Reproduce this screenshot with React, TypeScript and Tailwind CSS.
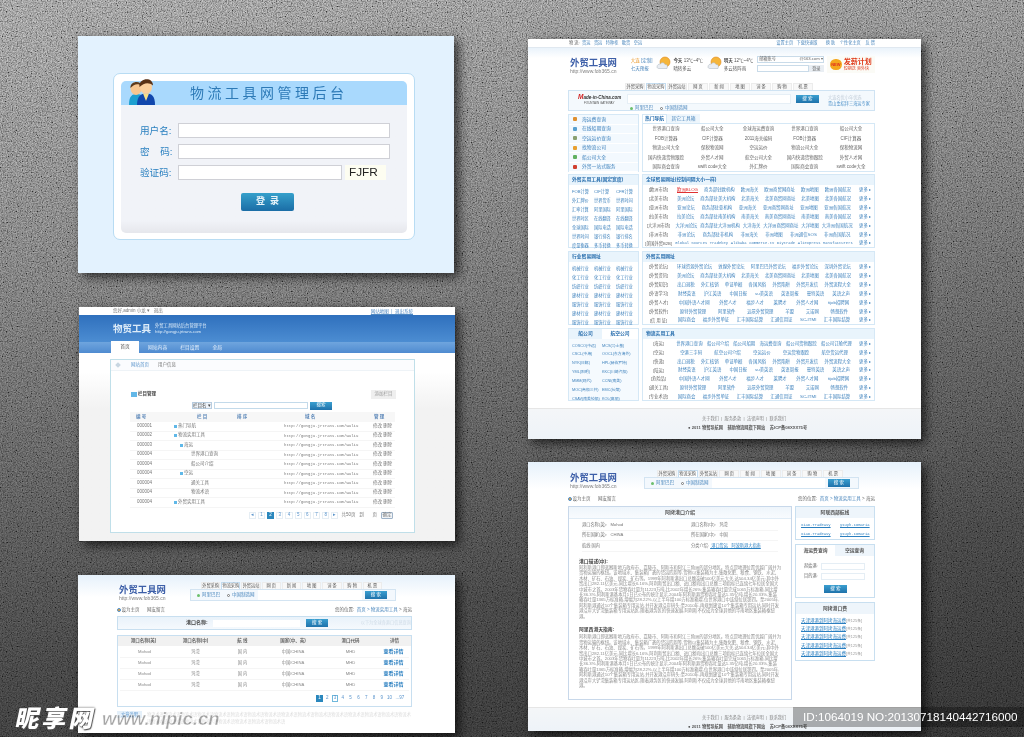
const fontStack = "font-['Liberation_Sans','Noto_Sans_CJK_SC',sans-serif]";

const tabs = ["外贸采购", "物流采购", "外贸运站", "网 页", "新 闻", "地 图", "词 条", "购 物", "机 票"];

function Logo() {
  return (
    <div>
      <div className="text-[9.4px] leading-[11px] font-bold text-[#3d5fa8] whitespace-nowrap">外贸工具网</div>
      <div className="text-[5px] leading-[7px] text-[#808080] whitespace-nowrap">http://www.fob365.cn</div>
    </div>
  );
}

function TabRow({ w }: { w: number }) {
  return (
    <div className="flex items-end gap-[1px]" style={{ width: w }}>
      {tabs.map((t, i) => (
        <div
          key={t}
          className={`flex-1 h-[7px] flex items-center justify-center text-[4.2px] text-[#555] whitespace-nowrap border-t border-x ${i === 1 ? "bg-white border-[#c4dcef]" : "bg-[#f8f8f8] border-[#ececec]"}`}
        >
          {t}
        </div>
      ))}
    </div>
  );
}

function Radios() {
  return (
    <div className="flex items-center gap-[7px] text-[4.5px] text-[#4a86bc] whitespace-nowrap">
      <span className="flex items-center gap-[2px]">
        <span className="w-[3px] h-[3px] rounded-full bg-[#6cbf6c]" />
        阿里巴巴
      </span>
      <span className="flex items-center gap-[2px]">
        <span className="w-[3px] h-[3px] rounded-full border-[0.5px] border-[#777] bg-white" />
        中国制造网
      </span>
    </div>
  );
}

function BlueBtn({ label, className }: { label: string; className: string }) {
  return (
    <div className={`flex items-center justify-center bg-gradient-to-b from-[#3a9fd0] to-[#1f72ab] text-white text-[4.5px] whitespace-nowrap ${className}`}>
      {label}
    </div>
  );
}

function Users() {
  return (
    <svg width="27" height="27" viewBox="0 0 27 27" className="shrink-0">
      <path d="M0 27 C0 18 3 16 8 16 C13 16 15 19 15 27Z" fill="#1d9fd0" />
      <ellipse cx="7" cy="10.5" rx="5.5" ry="6.5" fill="#f7c690" />
      <path d="M1.5 10 C1 3 12 2 13 8 C9 5 5 6 1.5 10Z" fill="#5b3a1e" />
      <path d="M8 27 C8 18 12 15.5 17 15.5 C23 15.5 26 18 26 27Z" fill="#1147ad" />
      <path d="M14 15.5 L17 23 L20 15.5Z" fill="#f6e08a" />
      <ellipse cx="17" cy="9" rx="6" ry="7" fill="#fbcf9c" />
      <path d="M10.500 9 C9 0 24 -2 24 7.500 C20 4 15 4.500 10.500 9Z" fill="#5a3216" />
    </svg>
  );
}

function LoginCard() {
  const label = "w-[33px] text-[9.6px] leading-[15px] text-[#2b80c0] whitespace-nowrap";
  const input = "h-[15px] bg-white border border-[#cfd0d6]";
  return (
    <div className="absolute left-[78px] top-[36px] w-[376px] h-[237px] bg-[#e3f2fe] shadow-[5px_4px_10px_rgba(0,0,0,0.65)] pt-[37px] pl-[35px] blur-[0.3px]">
      <div className="w-[302px] h-[167px] bg-white border border-[#b8dcf3] rounded-[7px] p-[7px]">
        <div className="h-[24px] bg-[#a9d9fd] rounded-t-[5px] flex items-end pl-[8px] relative">
          <Users />
          <div className="flex-1 h-[24px] flex items-center pl-[34px] text-[14px] tracking-[3.5px] text-[#2d7ab7] whitespace-nowrap">物流工具网管理后台</div>
        </div>
        <div className="h-[128px] bg-gradient-to-b from-[#f1f3f8] from-90% to-[#e6e7ec] rounded-b-[5px] pt-[18px] pl-[19px]">
          <div className="flex items-center gap-[5px] h-[15px]">
            <div className={label}>用户名:</div>
            <div className={`${input} w-[212px]`} />
          </div>
          <div className="flex items-center gap-[5px] h-[15px] mt-[6px]">
            <div className={label}>密&nbsp;&nbsp;&nbsp;&nbsp;码:</div>
            <div className={`${input} w-[212px]`} />
          </div>
          <div className="flex items-center gap-[5px] h-[15px] mt-[6px]">
            <div className={label}>验证码:</div>
            <div className={`${input} w-[164px]`} />
            <div className="ml-[-2px] w-[41px] h-[15px] bg-[#fdfdf1] text-[11.8px] leading-[15px] pl-[4px] text-[#222]">FJFR</div>
          </div>
          <div className="w-[53px] h-[18px] mt-[13px] ml-[101px] rounded-[2px] bg-gradient-to-b from-[#36a0cb] to-[#1b6da6] flex items-center justify-center text-[9px] text-[#e8f4fa] font-bold">
            登&nbsp;&nbsp;录
          </div>
        </div>
      </div>
    </div>
  );
}

const adminRows: [string, string, number][] = [
  ["000001", "热门导航", 0],
  ["000002", "物流实用工具", 0],
  ["000003", "海运", 1],
  ["000004", "世界港口查询", 2],
  ["000004", "船公司介绍", 2],
  ["000004", "空运", 1],
  ["000004", "通关工具", 2],
  ["000004", "物流术语", 2],
  ["000004", "外贸实用工具", 0],
];

function AdminCard() {
  return (
    <div className="absolute left-[79px] top-[307px] w-[376px] h-[234px] bg-white shadow-[4px_4px_10px_rgba(0,0,0,0.7)] text-[4.5px] text-[#777] blur-[0.35px]">
      <div className="h-[8px] flex items-center justify-between pl-[34px] pr-[42px] whitespace-nowrap">
        <span>您好,admin 小龙 ▾ &nbsp; 退出</span>
        <span className="text-[#4f88c2] underline pt-[2px]">网站地图 &nbsp;|&nbsp; 退出系统</span>
      </div>
      <div className="h-[27px] bg-gradient-to-b from-[#2f70bd] to-[#4c8dd2] flex items-center pl-[34px] gap-[4px] pt-[1px]">
        <div className="text-[9.5px] text-[#dcebf8] font-bold whitespace-nowrap">物贸工具</div>
        <div className="text-[4.3px] leading-[6px] text-[#dcebf8] whitespace-nowrap">
          外贸工具网站后台管理平台
          <br />
          http://gongju.jrtrans.com
        </div>
      </div>
      <div className="h-[11px] bg-gradient-to-b from-[#6fa5de] to-[#4f8bd0] flex items-end pl-[32px] text-[#e7f1fb] text-[4.8px] relative">
        <div className="w-[28px] h-[12px] bg-white text-[#555] flex items-center justify-center">首页</div>
        <div className="h-[10px] flex items-center ml-[9px]">网站内容</div>
        <div className="h-[10px] flex items-center ml-[13px]">栏目设置</div>
        <div className="h-[10px] flex items-center ml-[13px]">全局</div>
      </div>
      <div className="h-[188px] bg-gradient-to-b from-white from-10% to-[#f2f2f2] to-30% pt-[6px] pl-[31px]">
        <div className="w-[305px] h-[174px] bg-white border-[1.5px] border-[#c0dfe9]">
          <div className="h-[11px] flex items-center border-b border-[#eef3f7] bg-[#fbfcfe] pl-[5px] whitespace-nowrap">
            <span className="w-[4px] h-[4px] bg-[#c8d6e2] rotate-45" />
            <span className="ml-[11px] text-[#5a94cc]">网站首页</span>
            <span className="ml-[9px]">用户信息</span>
          </div>
          <div className="flex items-center justify-between pl-[20px] pr-[18px] mt-[19px]">
            <div className="flex items-center gap-[1px] font-bold text-[#444] whitespace-nowrap">
              <span className="w-[6px] h-[5px] bg-[#63b8e8]" />
              栏目管理
            </div>
            <div className="w-[25px] h-[9px] bg-[#efefef] flex items-center justify-center text-[#999]">添加栏目</div>
          </div>
          <div className="flex items-center justify-center h-[9px] mt-[2px] pr-[1px] gap-[2px]">
            <div className="w-[20px] h-[7px] border border-[#b8cde0] bg-[#eef3f9] whitespace-nowrap leading-[5px] text-[#444]">栏目名 ▾</div>
            <div className="w-[94px] h-[7px] border border-[#c3daea] bg-white" />
            <BlueBtn label="搜索" className="w-[22px] h-[8px]" />
          </div>
          <div className="ml-[19px] w-[265px] mt-[2px]">
            <div className="h-[10px] bg-[#f7f7f7] grid grid-cols-[61px_40px_68px_69px_1fr] pl-[6px] items-center font-bold text-[#5a86b8]">
              <span>编&nbsp;号</span>
              <span>栏&nbsp;目</span>
              <span>排&nbsp;序</span>
              <span>域&nbsp;名</span>
              <span>管&nbsp;理</span>
            </div>
            {adminRows.map(([id, name, depth], i) => (
              <div key={i} className="h-[9.5px] border-b border-[#f5f5f5] grid grid-cols-[37px_110px_89px_1fr] pl-[7px] items-center whitespace-nowrap">
                <span>{id}</span>
                <span className="flex items-center gap-[1px]">
                  {depth === 0 && <span className="w-[3px] h-[3px] bg-[#5fb8e8]" />}
                  {depth === 1 && <span className="w-[3px] h-[3px] bg-[#5fb8e8] ml-[6px]" />}
                  {depth === 2 && <span className="ml-[16px]" />}
                  {name}
                </span>
                <span className="font-['Liberation_Mono',monospace] text-[4px]">http://gongju.jrtrans.com/wuliu</span>
                <span>修改 删除</span>
              </div>
            ))}
            <div className="flex items-center justify-end mt-[4px] gap-[2px] h-[8px] pr-[2px] whitespace-nowrap">
              {["◂", "1", "2", "3", "4", "5", "6", "7", "8", "▸"].map((p) => (
                <span key={p} className={`w-[7.200px] h-[7.200px] flex items-center justify-center border-[0.5px] ${p === "2" ? "bg-[#2a87bd] text-white border-[#2a87bd]" : "border-[#e6eef4] text-[#5a94cc]"}`}>
                  {p}
                </span>
              ))}
              <span className="ml-[1px]">共50页 &nbsp; 到 &nbsp;&nbsp;&nbsp;&nbsp;&nbsp; 页</span>
              <span className="ml-[2px] w-[12px] h-[7px] border border-[#9fb3c8] rounded-[1px] bg-[#f2f5f8] flex items-center justify-center">确定</span>
            </div>
          </div>
        </div>
      </div>
    </div>
  );
}

function SearchStrip({ w }: { w: number }) {
  return (
    <div className="h-[12px] border border-[#d3e4f2] bg-[#f3f8fd] flex items-center pl-[6px] pr-[8px]" style={{ width: w }}>
      <Radios />
      <div className="flex-1 h-[10px] bg-white mx-[3px]" />
      <BlueBtn label="搜 索" className="w-[22px] h-[8px]" />
    </div>
  );
}

const portRow = ["Mohod", "玛湾", "国 内", "中国/CHINA", "MHD", "查看详情"];

function Crumb() {
  return (
    <div className="flex items-center justify-between h-[8px] text-[4.5px] text-[#666] whitespace-nowrap">
      <span className="flex items-center gap-[1px]">
        <span className="w-[3.500px] h-[3.500px] rounded-full bg-[#f0a030] border-[0.5px] border-[#4a90d0]" />
        设为主页 &nbsp;&nbsp;&nbsp;&nbsp; 网友留言
      </span>
      <span>
        您的位置:&nbsp; <span className="text-[#4a86bc]">首页 &gt; 物流实用工具</span> &gt; 海运
      </span>
    </div>
  );
}

function PortCard() {
  return (
    <div className="absolute left-[78px] top-[575px] w-[377px] h-[158px] bg-gradient-to-b from-[#e6f1fb] to-white to-[14%] shadow-[4px_4px_10px_rgba(0,0,0,0.7)] blur-[0.35px]">
      <div className="flex pl-[41px] pt-[7px] h-[26px]">
        <div className="w-[71px] pt-[2px]">
          <Logo />
        </div>
        <div className="flex flex-col">
          <div className="ml-[11px]">
            <TabRow w={181} />
          </div>
          <SearchStrip w={206} />
        </div>
      </div>
      <div className="ml-[39px] w-[295px]">
        <div className="mt-[5px]">
          <Crumb />
        </div>
        <div className="mt-[2px] h-[14px] border border-[#c8dff0] bg-gradient-to-b from-[#e9f2fa] to-[#f5f9fd] flex items-center text-[5px] whitespace-nowrap">
          <span className="ml-[68px] font-bold text-[#444]">港口名称:</span>
          <span className="w-[90px] h-[7px] bg-white ml-[5px]" />
          <BlueBtn label="搜 索" className="w-[22px] h-[8px] ml-[6px]" />
          <span className="ml-[33px] text-[4.2px] text-[#cfdbe6]">以下为全球各港口信息查询</span>
        </div>
        <div className="mt-[5px] h-[72px] border border-[#c8dff0] bg-white">
          <div className="h-[10px] bg-[#f1f1f1] grid grid-cols-[51px_53px_41px_60px_55px_1fr] items-center text-center text-[4.500px] font-bold text-[#666] whitespace-nowrap">
            <span>港口名称(英)</span>
            <span>港口名称(中)</span>
            <span>航 线</span>
            <span>国家(中、英)</span>
            <span>港口代码</span>
            <span>详情</span>
          </div>
          <div className="mt-[1px] px-[2px]">
            {[0, 1, 2, 3].map((r) => (
              <div key={r} className="h-[11px] border-b border-[#f5f5f5] grid grid-cols-[49px_53px_41px_60px_55px_1fr] items-center text-center text-[4.200px] text-[#888] whitespace-nowrap">
                {portRow.map((c, i) => (
                  <span key={i} className={i === 5 ? "text-[#2a7fc0] font-bold text-[5px]" : ""}>
                    {c}
                  </span>
                ))}
              </div>
            ))}
          </div>
          <div className="flex justify-end items-center gap-[1px] mt-[4px] pr-[5px] text-[4.5px] text-[#5a94cc] whitespace-nowrap">
            {["1", "2", "3", "4", "5", "6", "7", "8", "9", "10", "...97"].map((p, i) => (
              <span key={p} className={`h-[7px] flex items-center justify-center ${i > 9 ? "w-[12px]" : "w-[6.800px]"} ${i === 0 ? "bg-[#2a87bd] text-white" : ""} ${i === 2 ? "border-[0.5px] border-[#6fb8dc]" : ""}`}>
                {p}
              </span>
            ))}
          </div>
        </div>
        <div className="mt-[4px] flex text-[4.2px] leading-[7px] text-[#dcdcdc]">
          <span className="w-[25px] h-[7px] shrink-0 bg-[#e4f0fa] text-[#5a94cc] text-center">文章说明</span>
          <span className="ml-[5px] break-all">物流术语物流术语物流术语物流术语物流术语物流术语物流术语物流术语物流术语物流术语物流术语物流术语物流术语物流术语物流术语物流术语物流术语物流术语物流术语物流术语物流术语物流术语物流术语物流术语</span>
        </div>
      </div>
    </div>
  );
}

function Weather() {
  return (
    <svg width="15" height="15" viewBox="0 0 15 15" className="shrink-0">
      <circle cx="9" cy="6" r="5" fill="#f5b53a" stroke="#e08a20" strokeWidth="0.6" />
      <path d="M1 11 C1 8.500 3 8 4.500 8 C5 6.500 8 6 9 8.500 C11 8 12 10 11 12.500 L3 12.500 C2 12.500 1 12 1 11Z" fill="#e9edf2" stroke="#a8b2bc" strokeWidth="0.5" />
    </svg>
  );
}

function FooterBar({ h }: { h: number }) {
  return (
    <div className="bg-gradient-to-b from-[#f4f6f8] to-[#eef3f8] border-t border-[#e6e6e6] pl-[174px] text-[4.2px] whitespace-nowrap" style={{ height: h }}>
      <div className="mt-[6px] leading-[8px] text-[#888]">关于我们 &nbsp;|&nbsp; 服务条款 &nbsp;|&nbsp; 法律声明 &nbsp;|&nbsp; 联系我们</div>
      <div className="mt-[1px] ml-[-14px] leading-[8px] text-[#555] font-bold">● 2011 物贸导航网 &nbsp;&nbsp; 辅助物流网旗下网站 &nbsp;&nbsp; 苏ICP备08XXX75号</div>
    </div>
  );
}

const menu = ["海运费查询", "在线船期查询", "空运运价查询", "找物流公司", "船公司大全", "外贸一站式服务"];
const menuColors = ["#e09030", "#58a0d0", "#8aa070", "#e8a030", "#60b060", "#d04030"];
const hot = [
  "世界港口查询", "船公司大全", "全球海运费查询", "世界港口查询", "船公司大全",
  "FOB计算器", "CIF计算器", "2011海关编码", "FOB计算器", "CIF计算器",
  "物流公司大全", "保税物流网", "空运运价", "物流公司大全", "保税物流网",
  "国内快递货物跟踪", "外贸人才网", "航空公司大全", "国内快递货物跟踪", "外贸人才网",
  "国际商会查询", "swift code大全", "外汇牌价", "国际商会查询", "swift code大全",
];
const tools = ["FOB计算", "CIF计算", "CFR计算", "外汇牌价", "世界货币", "世界时间", "汇率计算", "阿里国际", "阿里国际", "世界时区", "在线翻译", "在线翻译", "全球国际", "国际电话", "国际电话", "世界时间", "银行排名", "银行排名", "度量衡器", "多币转换", "多币转换"];
const trades = ["机械行业", "机械行业", "机械行业", "化工行业", "化工行业", "化工行业", "纺织行业", "纺织行业", "纺织行业", "建材行业", "建材行业", "建材行业", "服饰行业", "服饰行业", "服饰行业", "建材行业", "建材行业", "建材行业", "服饰行业", "服饰行业", "服饰行业"];
const lines = ["COSCO(中远)", "MCS(马士基)", "CSCL(中海)", "OOCL(东方海外)", "NYK(日邮)", "HPL(赫伯罗特)", "YML(阳明)", "KKC(川崎汽船)", "MMM(现代)", "CCNI(南美)", "MOC(商船三井)", "EMC(长荣)", "CSAV(南美轮船)", "KOL(高丽)"];

const global: [string, string[]][] = [
  ["欧洲市场", ["欧洲BLOG", "商务部驻欧机构", "欧洲海关", "欧洲商贸网商址", "欧洲地图", "欧洲各国航况"]],
  ["北美市场", ["美洲论坛", "商务部驻美大机构", "北美海关", "北美商贸网商址", "北美地图", "北美各国航况"]],
  ["亚洲市场", ["亚洲论坛", "商务部驻亚机构", "亚洲海关", "亚洲商贸网商址", "亚洲地图", "亚洲各国航况"]],
  ["拉美市场", ["拉美论坛", "商务部驻南美机构", "南美海关", "南美商贸网商址", "南美地图", "南美各国航况"]],
  ["大洋洲市场", ["大洋洲论坛", "商务部驻大洋洲机构", "大洋海关", "大洋洲商贸网商址", "大洋地图", "大洋洲各国航况"]],
  ["非洲市场", ["非洲论坛", "商务部驻非机构", "非洲海关", "非洲地图", "非洲通信SOS", "非洲各国航况"]],
  ["美国外贸B2B", ["Global Sources", "Tradekey", "Alibaba", "Commerce.tv", "Diytrade", "Aliexpress", "Manufacturers"]],
];
const useful: [string, string[]][] = [
  ["外贸论坛", ["环球资源外贸论坛", "敦煌外贸论坛", "阿里巴巴外贸论坛", "福步外贸论坛", "深圳外贸论坛"]],
  ["外贸资讯", ["美洲论坛", "商务部驻美大机构", "北美海关", "北美商贸网商址", "北美地图", "北美各国航况"]],
  ["外贸知识", ["出口退税", "外汇核销", "单证单据", "各国风俗", "外贸陷阱", "外贸开发信", "外贸流程大全"]],
  ["外语学习", ["财经英语", "沪江英语", "中国日报", "su美英语", "英语周报", "曼特英语", "英语之声"]],
  ["外贸人才", ["中国外语人才网", "外贸人才", "福步人才", "莱聘才", "外贸人才网", "tijob招聘网"]],
  ["外贸软件", ["原特外贸管理", "阿里软件", "远景外贸管理", "羊盟", "艾诺网", "畅想软件"]],
  ["信 用 证", ["国际商会", "福步外贸单证", "汇丰国际结算", "汇通信用证", "SC-ITMI", "汇丰国际结算"]],
];
const logistics: [string, string[]][] = [
  ["海运", ["世界港口查询", "船公司介绍", "船公司船期", "海运费查询", "船公司货物跟踪", "船公司订舱代理"]],
  ["空运", ["空港三字码", "航空公司介绍", "空运运价", "空运货物跟踪", "航空货运代理"]],
  ["快递", ["出口退税", "外汇核销", "单证单据", "各国风俗", "外贸陷阱", "外贸开发信", "外贸流程大全"]],
  ["陆运", ["财经英语", "沪江英语", "中国日报", "su美英语", "英语周报", "曼特英语", "英语之声"]],
  ["危险品", ["中国外语人才网", "外贸人才", "福步人才", "莱聘才", "外贸人才网", "tijob招聘网"]],
  ["通关工具", ["原特外贸管理", "阿里软件", "远景外贸管理", "羊盟", "艾诺网", "畅想软件"]],
  ["专业术语", ["国际商会", "福步外贸单证", "汇丰国际结算", "汇通信用证", "SC-ITMI", "汇丰国际结算"]],
];

function LinkRows({ rows, rowH }: { rows: [string, string[]][]; rowH: string }) {
  return (
    <div className="pt-[1px]">
      {rows.map(([label, items]) => (
        <div key={label} className={`flex items-center pl-[2px] pr-[3px] text-[4.4px] text-[#3f82bd] whitespace-nowrap ${rowH}`}>
          <span className="w-[27px] shrink-0 text-center text-[#666] text-[4.2px]">[{label}]</span>
          <div className={`flex-1 flex justify-around mx-[2px] ${label === "美国外贸B2B" ? "font-['Liberation_Mono',monospace] text-[3.800px]" : ""}`}>
            {items.map((it, i) => (
              <span key={i} className={it === "欧洲BLOG" ? "text-[#e03030] underline" : ""}>
                {it}
              </span>
            ))}
          </div>
          <span className="w-[15px] shrink-0 text-right">更多 ▸</span>
        </div>
      ))}
    </div>
  );
}

function Panel({ title, children, className }: { title: string; children: React.ReactNode; className: string }) {
  return (
    <div className={`border border-[#d5e8f6] bg-white ${className}`}>
      <div className="h-[10px] bg-[#e9f4fc] flex items-center pl-[3px] text-[4.8px] font-bold text-[#2a6fae] whitespace-nowrap">{title}</div>
      {children}
    </div>
  );
}

function MiniGrid({ items, className }: { items: string[]; className: string }) {
  return (
    <div className={`grid pl-[3px] pt-[3px] text-[4.2px] text-[#3f82bd] whitespace-nowrap ${className}`}>
      {items.map((it, i) => (
        <span key={i} className="h-[8.900px] flex items-center">
          {it}
        </span>
      ))}
    </div>
  );
}

function HomeCard() {
  return (
    <div className="absolute left-[528px] top-[39px] w-[393px] h-[400px] bg-white shadow-[4px_4px_10px_rgba(0,0,0,0.7)] blur-[0.35px]">
      <div className="h-[9px] border-b border-[#e0e8f0] flex items-center justify-between pl-[41px] pr-[46px] text-[4.2px] text-[#666] whitespace-nowrap">
        <span>
          物 流: <span className="text-[#4a86bc]">&nbsp;货运&nbsp;&nbsp; 货运&nbsp;&nbsp; 特种柜&nbsp;&nbsp; 散货&nbsp;&nbsp; 空运</span>
        </span>
        <span className="text-[#4a86bc]">设置主页 &nbsp; 下载快速版 &nbsp;&nbsp;&nbsp;&nbsp;&nbsp; 换 肤 &nbsp;&nbsp; 个性化主页 &nbsp;&nbsp; 反 馈</span>
      </div>
      <div className="bg-gradient-to-b from-[#eaf3fb] to-white to-40% pl-[40px] pr-[46px] pt-[8px]">
        <div className="flex h-[17px] items-start">
          <div className="w-[64px] pl-[2px] pt-[1px]">
            <Logo />
          </div>
          <div className="w-[26px] text-[4.500px] leading-[8px] pt-[1px] text-[#4a86bc] whitespace-nowrap">
            <span className="text-[#e8921e]">大连</span> [定制]
            <br />
            七天预报
          </div>
          <Weather />
          <div className="w-[34px] ml-[2px] text-[4.500px] leading-[8px] pt-[1px] text-[#555] whitespace-nowrap">
            <b>今天</b> 13℃~4℃
            <br />
            晴转多云
          </div>
          <Weather />
          <div className="w-[34px] ml-[2px] text-[4.500px] leading-[8px] pt-[1px] text-[#555] whitespace-nowrap">
            <b>明天</b> 12℃~4℃
            <br />
            多云转阵雨
          </div>
          <div className="w-[68px] text-[4.2px] text-[#666]">
            <div className="h-[7px] border border-[#c9dbe9] flex items-center justify-between pl-[1px] whitespace-nowrap">
              <span>邮箱账号</span>
              <span>@163.com ▾</span>
            </div>
            <div className="flex mt-[2px]">
              <div className="flex-1 h-[7px] border border-[#c9dbe9]" />
              <div className="w-[15px] h-[7px] bg-[#e9eef3] text-center leading-[7px]">登录</div>
            </div>
          </div>
          <div className="ml-[3px] w-[49px] h-[17px] bg-[#fbfbf6] flex items-center gap-[2px] pl-[3px]">
            <span className="w-[12px] h-[11px] rounded-full bg-[#f5a81e] text-[#e03020] text-[4px] flex items-center justify-center font-bold">NEW</span>
            <span className="text-[7px] leading-[8px] text-[#e03a1a] font-bold whitespace-nowrap">
              发薪计划
              <br />
              <span className="block text-[4px] leading-[5px] font-normal">短期送 爽外快</span>
            </span>
          </div>
        </div>
      </div>
      <div className="ml-[40px] w-[307px]">
        <div className="pl-[57px] mt-[10px]">
          <TabRow w={188} />
        </div>
        <div className="h-[21px] border border-[#cfe3f3] bg-[#f4f9fd] flex pl-[9px]">
          <div className="w-[49px] pt-[3px] whitespace-nowrap">
            <div className="text-[4.500px] leading-[6px] font-bold italic text-[#333]">
              <span className="text-[#d02020] text-[6.500px]">M</span>ade-in-China.com
            </div>
            <div className="text-[3px] leading-[4px] text-[#555] ml-[6px]">FOUNTAIN GATEWAY</div>
          </div>
          <div className="w-[164px] pt-[3px]">
            <div className="h-[10px] bg-white border border-[#e6eff6]" />
            <div className="mt-[1px] ml-[3px]">
              <Radios />
            </div>
          </div>
          <BlueBtn label="搜 索" className="w-[23px] h-[8px] mt-[4px] ml-[5px]" />
          <div className="ml-[9px] pt-[4px] text-[4.200px] leading-[6px] whitespace-nowrap text-[#c0ccd8]">
            大连名优小年优选
            <div className="text-[#4a8fc8]">青山重招拜三海运专家</div>
          </div>
        </div>

        <div className="flex gap-[3px] mt-[3px] h-[58px]">
          <div className="w-[71px] border border-[#d5e8f6] bg-[#f3f9fe]">
            {menu.map((m, i) => (
              <div key={m} className="h-[9.500px] border-b border-white flex items-center pl-[4px] gap-[5px] text-[4.800px] text-[#3f82bd] whitespace-nowrap">
                <span className="w-[4px] h-[4px] rounded-[1px] shrink-0" style={{ backgroundColor: menuColors[i] }} />
                {m}
              </div>
            ))}
          </div>
          <div className="w-[233px]">
            <div className="flex h-[9px] text-[4.800px] whitespace-nowrap">
              <div className="w-[25px] border-x border-t border-[#d5e8f6] bg-white font-bold text-[#2a6fae] flex items-center justify-center">热门导航</div>
              <div className="w-[33px] bg-[#eef6fc] text-[#4a86bc] flex items-center justify-center">其它工具箱</div>
            </div>
            <div className="h-[49px] border border-[#d5e8f6] grid grid-cols-5 text-[4.500px] text-[#666] text-center whitespace-nowrap pt-[1px]">
              {hot.map((h, i) => (
                <span key={i} className="h-[9.500px] flex items-center justify-center">
                  {h}
                </span>
              ))}
            </div>
          </div>
        </div>

        <div className="flex gap-[3px] mt-[2px] h-[74px]">
          <Panel title="外贸实用工具(固定宽度)" className="w-[71px]">
            <MiniGrid items={tools} className="grid-cols-3" />
          </Panel>
          <Panel title="全球贸易网址(控制间隔大小一样)" className="w-[233px]">
            <LinkRows rows={global} rowH="h-[8.900px]" />
          </Panel>
        </div>

        <div className="flex gap-[3px] mt-[3px] h-[74px]">
          <Panel title="行业贸易网址" className="w-[71px]">
            <MiniGrid items={trades} className="grid-cols-3" />
          </Panel>
          <Panel title="外贸实用网址" className="w-[233px]">
            <LinkRows rows={useful} rowH="h-[8.900px]" />
          </Panel>
        </div>

        <div className="flex gap-[3px] mt-[3px] h-[73px]">
          <div className="w-[71px] border border-[#d5e8f6] bg-[#f5fafe]">
            <div className="flex h-[10px] text-[4.800px] font-bold text-[#2a6fae] whitespace-nowrap">
              <div className="w-[33px] flex items-center justify-center bg-[#e9f4fc]">船公司</div>
              <div className="flex-1 flex items-center justify-center bg-white">航空公司</div>
            </div>
            <MiniGrid items={lines} className="grid-cols-[30px_1fr] !text-[3.800px]" />
          </div>
          <Panel title="物流实用工具" className="w-[233px]">
            <LinkRows rows={logistics} rowH="h-[8.800px]" />
          </Panel>
        </div>
      </div>
      <div className="mt-[7px]">
        <FooterBar h={31} />
      </div>
    </div>
  );
}

const intro =
  "阿利斯港口即蓝察斯地方政府市、嘉陵市、阿斯市和阿江三角洲的部分地区。特点是地理位置优越广阔并为货物运输的枢纽。该地域水、集装箱广袤的货运四周等,货物以集装箱为主,集散化肥、粮食、钢铁、水泥、木材、矿石、石油、煤炭、矿石等。1999年阿利斯港出口总额突破500亿美元大关,达504.34亿美元;其中外贸出口282.11亿美元,同比增长6.16%,阿利斯贸出口额、进口额和出口总额三项指标已连续七年位居全国大中城市之首。2003年货物吞吐量为11223万吨,比2002年增长26%;集装箱吞吐量完成1065万标准箱,同比增长36.3%,阿利斯港基本月1日已公布的统计显示,2004年阿利斯港货物吞吐量达1.35亿吨,增长20.33%,集装箱吞吐量1365万标准箱,增幅为28.22%,以上半年增100万标准箱增,位世界港口中连续位居第四。至2005年,阿利斯港通过10个集装箱专用运站,并开发港沿岸码头;至2010年,再规划建设10个集装箱专用运站,同时开发港沿岸大铲湾集装箱专用运站区,随着港务区的快速发展,阿利斯不仅成为全球其他的华南地区集装箱枢纽港。";

function PortInfoCard() {
  return (
    <div className="absolute left-[528px] top-[462px] w-[393px] h-[269px] bg-gradient-to-b from-[#e6f1fb] to-white to-[10%] shadow-[4px_4px_10px_rgba(0,0,0,0.7)] blur-[0.35px]">
      <div className="flex pl-[42px] pt-[8px] h-[27px]">
        <div className="w-[74px] pt-[2px]">
          <Logo />
        </div>
        <div className="flex flex-col">
          <div className="ml-[13px]">
            <TabRow w={186} />
          </div>
          <SearchStrip w={215} />
        </div>
      </div>
      <div className="ml-[40px] w-[307px]">
        <div className="mt-[6px]">
          <Crumb />
        </div>
        <div className="flex gap-[3px] mt-[3px] h-[194px]">
          <div className="w-[224px] h-[194px] border border-[#c8d8ea] bg-white">
            <div className="h-[12px] bg-gradient-to-b from-[#eef5fb] to-[#f8fbfe] border-b border-[#e0ecf6] flex items-center justify-center text-[5px] font-bold text-[#555]">阿拷港口介绍</div>
            <div className="px-[13px] pt-[1px] text-[4.2px] text-[#777] whitespace-nowrap">
              <div className="h-[10.500px] border-b border-[#f5f5f5] grid grid-cols-[109px_1fr] items-center">
                <span>港口名称(英): &nbsp; Mohod</span>
                <span>港口名称(中): &nbsp; 玛湾</span>
              </div>
              <div className="h-[10.500px] border-b border-[#f5f5f5] grid grid-cols-[109px_1fr] items-center">
                <span>所在国家(英): &nbsp; CHINA</span>
                <span>所在国家(中): &nbsp; 中国</span>
              </div>
              <div className="h-[10.500px] border-b border-[#f5f5f5] grid grid-cols-[109px_1fr] items-center">
                <span>航线:国内</span>
                <span>
                  分类介绍: <span className="text-[#2a7fc0] underline">&nbsp;港口货运 &nbsp; 阿波斯港大指南</span>
                </span>
              </div>
            </div>
            <div className="px-[10px] text-[4.3px] leading-[5.400px] text-[#8c8c8c] break-all">
              <div className="mt-[7px] mb-[1px] font-bold text-[#444] text-[4.8px]">港口描述(中):</div>
              <p className="h-[54px] overflow-hidden">{intro}</p>
              <div className="mt-[8px] mb-[2px] font-bold text-[#444] text-[4.8px]">阿里西港天指南:</div>
              <p className="h-[54px] overflow-hidden">{intro}</p>
            </div>
          </div>
          <div className="w-[80px] flex flex-col gap-[4px]">
            <div className="h-[34px] border border-[#c8dff0] bg-white">
              <div className="h-[11px] bg-[#eef5fb] flex items-center justify-center text-[4.8px] font-bold text-[#555]">阿联西部航线</div>
              <div className="grid grid-cols-[39px_1fr] pt-[3px] pl-[5px] text-[3.800px] leading-[9px] text-[#2a7fc0] underline whitespace-nowrap font-['Liberation_Mono',monospace]">
                <span>xiao.Tradeasy</span>
                <span>ysuyh.comaria</span>
                <span>xiao.Tradeasy</span>
                <span>ysuyh.comaria</span>
              </div>
            </div>
            <div className="h-[54px] border border-[#c8dff0] bg-white">
              <div className="flex h-[11px] text-[4.8px] font-bold text-[#555] whitespace-nowrap">
                <div className="w-[39px] flex items-center justify-center bg-white">海运费查询</div>
                <div className="flex-1 flex items-center justify-center bg-[#eef5fb]">空运查询</div>
              </div>
              <div className="flex items-center mt-[7px] pl-[8px] gap-[3px] text-[4.2px] text-[#666] whitespace-nowrap">
                <span>起始港:</span>
                <span className="w-[44px] h-[7px] border border-[#e5eef5]" />
              </div>
              <div className="flex items-center mt-[3px] pl-[8px] gap-[3px] text-[4.2px] text-[#666] whitespace-nowrap">
                <span>目的港:</span>
                <span className="w-[44px] h-[7px] border border-[#e5eef5]" />
              </div>
              <BlueBtn label="搜 索" className="w-[23px] h-[8px] ml-[28px] mt-[5px]" />
            </div>
            <div className="h-[59px] border border-[#c8dff0] bg-white">
              <div className="h-[11px] bg-[#eef5fb] flex items-center justify-center text-[4.8px] font-bold text-[#555]">阿拷港口费</div>
              <div className="pl-[5px] pt-[3px] text-[4.500px] leading-[7.200px] text-[#2a7fc0] whitespace-nowrap">
                {[0, 1, 2, 3, 4].map((i) => (
                  <div key={i}>
                    <span className="underline">天津港港到阿拷海运费</span>
                    <span className="text-[#999] text-[3.800px]">[共125条]</span>
                  </div>
                ))}
              </div>
            </div>
          </div>
        </div>
      </div>
      <div className="mt-[7px]">
        <FooterBar h={24} />
      </div>
    </div>
  );
}

export default function App() {
  return (
    <div className={`relative w-[1024px] h-[737px] overflow-hidden bg-[linear-gradient(172deg,#858585_0%,#6c6c6c_28%,#525252_52%,#3a3a3a_76%,#2a2a2a_100%)] ${fontStack}`}>
      <svg width="1024" height="737" className="absolute inset-0 mix-blend-overlay opacity-60">
        <filter id="grain">
          <feTurbulence type="fractalNoise" baseFrequency="0.8" numOctaves="2" seed="4" />
          <feColorMatrix type="matrix" values="1.600 0 0 0 -0.300  1.600 0 0 0 -0.300  1.600 0 0 0 -0.300  0 0 0 0 1" />
        </filter>
        <rect width="1024" height="737" filter="url(#grain)" />
      </svg>
      <LoginCard />
      <AdminCard />
      <PortCard />
      <HomeCard />
      <PortInfoCard />
      <div className="absolute left-[16px] top-[704px] flex items-center whitespace-nowrap">
        <span className="text-[24px] leading-[30px] font-black text-white tracking-[3px] -skew-x-12 [text-shadow:0_0_2px_#444,1px_1px_1px_#555]">昵享网</span>
        <span className="ml-[5px] text-[18.500px] font-bold italic text-black/35 [-webkit-text-stroke:0.5px_rgba(255,255,255,0.8)]">www.nipic.cn</span>
      </div>
      <div className="absolute left-[793px] top-[707px] w-[231px] h-[20px] bg-black/30 flex items-center pl-[10px] text-[11.7px] text-white whitespace-nowrap">
        ID:1064019 NO:20130718140442716000
      </div>
    </div>
  );
}
